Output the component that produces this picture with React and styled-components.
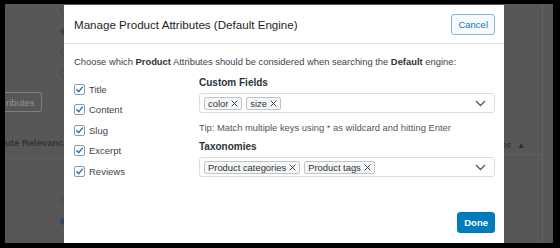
import styled, { createGlobalStyle } from "styled-components";

const GlobalStyle = createGlobalStyle`
  html, body {
    margin: 0;
    padding: 0;
    background: #000;
  }
  body {
    font-family: "Liberation Sans", Arial, sans-serif;
  }
`;

const Frame = styled.div`
  position: relative;
  margin: 4px 7px 0 5px;
  height: 239px;
  background: #575757;
  overflow: hidden;
  display: grid;
  grid-template-columns: 1fr 130px;
`;

const LeftPane = styled.div`
  display: flex;
  flex-direction: column;
  align-items: flex-start;
`;

const RadioStack = styled.div`
  display: flex;
  flex-direction: column;
  gap: 14px;
  padding: ${(p) => p.$pad || "3px 0 0 55px"};
`;

const Radio = styled.span`
  width: 7px;
  height: 7px;
  border-radius: 50%;
  box-sizing: border-box;
  border: 1px solid #3f4a55;
  background: ${(p) => (p.$on ? "#2d4763" : "transparent")};
`;

const GhostButton = styled.div`
  margin-top: 15px;
  width: 37px;
  height: 20px;
  box-sizing: border-box;
  border: 1px solid #7d7d7d;
  border-left: none;
  border-radius: 0 3px 3px 0;
  color: #8e959c;
  font-size: 9.5px;
  display: flex;
  align-items: center;
  padding-left: 1px;
`;

const Rule = styled.div`
  align-self: stretch;
  height: 1px;
  background: #5f5f5f;
  margin-top: ${(p) => p.$top || 0}px;
`;

const SectionLabel = styled.div`
  margin-top: 25px;
  color: #343434;
  font-size: 9.5px;
  font-weight: 700;
  white-space: nowrap;
`;

const RightPane = styled.div`
  display: flex;
  justify-content: flex-end;
`;

const SidePanel = styled.div`
  width: 48px;
  border-right: 1px solid #636363;
  margin-right: 10px;
  display: flex;
  flex-direction: column;
`;

const PanelHead = styled.div`
  margin-top: 132px;
  height: 18px;
  display: flex;
  align-items: center;
  gap: 6px;
  padding-left: 1px;
  color: #2f2f2f;
  font-size: 8.5px;
  border-bottom: 1px solid #5f5f5f;
`;

const Modal = styled.div`
  position: absolute;
  top: 1px;
  left: 59px;
  width: 440px;
  bottom: 0;
  background: #fff;
  display: flex;
  flex-direction: column;
`;

const Header = styled.div`
  height: 38px;
  border-bottom: 1px solid #e3e4e6;
  display: flex;
  align-items: center;
  justify-content: space-between;
  padding: 0 9px 0 10px;
`;

const Title = styled.h1`
  margin: 0;
  font-size: 11.6px;
  font-weight: 400;
  color: #1e1e1e;
`;

const Button = styled.button`
  height: 21px;
  box-sizing: border-box;
  border-radius: 3px;
  font-family: inherit;
  font-size: 9.5px;
  padding: 0 6px;
  cursor: pointer;
  border: 1px solid ${(p) => (p.$primary ? "#007cba" : "#84b7d6")};
  background: ${(p) => (p.$primary ? "#007cba" : "#f5fafd")};
  color: ${(p) => (p.$primary ? "#fff" : "#1d73ad")};
  font-weight: ${(p) => (p.$primary ? 700 : 400)};
`;

const Body = styled.div`
  padding: 12px 9px 0 10px;
  display: flex;
  flex-direction: column;
`;

const Intro = styled.p`
  margin: 0;
  font-size: 9.4px;
  line-height: 12px;
  color: #3c434a;

  b {
    font-weight: 700;
    color: #2c3338;
  }
`;

const Columns = styled.div`
  margin-top: 8px;
  display: flex;
`;

const CheckList = styled.div`
  width: 125px;
  padding-top: 3px;
  display: flex;
  flex-direction: column;
`;

const CheckRow = styled.label`
  height: 20.5px;
  display: flex;
  align-items: center;
  gap: 4px;
  font-size: 9.5px;
  color: #3c434a;
`;

const Box = styled.span`
  width: 11px;
  height: 11px;
  box-sizing: border-box;
  border: 1px solid #8d9aa6;
  border-radius: 2px;
  display: flex;
  align-items: center;
  justify-content: center;
  background: #fff;
`;

const Fields = styled.div`
  flex: 1;
  display: flex;
  flex-direction: column;
`;

const FieldLabel = styled.div`
  height: 14px;
  line-height: 14px;
  font-size: 10px;
  font-weight: 700;
  color: #2c3338;
  margin-top: ${(p) => p.$top || 0}px;
`;

const Select = styled.div`
  margin-top: 3px;
  height: 20px;
  box-sizing: border-box;
  border: 1px solid #dcdcde;
  border-radius: 3px;
  display: flex;
  align-items: center;
  gap: 4px;
  padding: 0 8px 0 4px;
`;

const Chip = styled.span`
  height: 13px;
  box-sizing: border-box;
  border: 1px solid #c3c4c7;
  border-radius: 2px;
  background: #f6f7f7;
  display: flex;
  align-items: center;
  gap: 3px;
  padding: 0 3px;
  font-size: 9.4px;
  color: #2c3338;
`;

const Chevron = styled.span`
  margin-left: auto;
  display: flex;
`;

const Tip = styled.p`
  margin: 9px 0 0;
  font-size: 9.4px;
  line-height: 12px;
  color: #50575e;
`;

const Footer = styled.div`
  margin-top: 35px;
  display: flex;
  justify-content: flex-end;
`;

const Check = () => (
  <svg width="9" height="9" viewBox="0 0 10 10">
    <path d="M2 5.2 L4.2 7.4 L8.2 2.4" fill="none" stroke="#2271b1" strokeWidth="1.6" strokeLinecap="round" strokeLinejoin="round" />
  </svg>
);

const Cross = () => (
  <svg width="7" height="7" viewBox="0 0 7 7">
    <path d="M0.6 0.6 L6.4 6.4 M6.4 0.6 L0.6 6.4" stroke="#3c434a" strokeWidth="1" />
  </svg>
);

const Down = () => (
  <svg width="11" height="7" viewBox="0 0 11 7">
    <path d="M1 1 L5.5 5.5 L10 1" fill="none" stroke="#50575e" strokeWidth="1.3" />
  </svg>
);

const attributes = ["Title", "Content", "Slug", "Excerpt", "Reviews"];

const Field = ({ label, chips, top }) => (
  <>
    <FieldLabel $top={top}>{label}</FieldLabel>
    <Select>
      {chips.map((c) => (
        <Chip key={c}>
          {c}
          <Cross />
        </Chip>
      ))}
      <Chevron>
        <Down />
      </Chevron>
    </Select>
  </>
);

export default function App() {
  return (
    <>
      <GlobalStyle />
      <Frame>
        <LeftPane>
          <RadioStack>
            <Radio />
            <Radio $on />
            <Radio />
            <Radio />
          </RadioStack>
          <GhostButton>ributes</GhostButton>
          <SectionLabel>ute Relevanc</SectionLabel>
          <Rule $top={10} />
          <RadioStack $pad="38px 0 0 55px">
            <Radio />
            <Radio $on />
          </RadioStack>
        </LeftPane>
        <RightPane>
          <SidePanel>
            <PanelHead>
              <span>utes</span>
              <span>▲</span>
            </PanelHead>
          </SidePanel>
        </RightPane>

        <Modal>
          <Header>
            <Title>Manage Product Attributes (Default Engine)</Title>
            <Button>Cancel</Button>
          </Header>
          <Body>
            <Intro>
              Choose which <b>Product</b> Attributes should be considered when
              searching the <b>Default</b> engine:
            </Intro>
            <Columns>
              <CheckList>
                {attributes.map((a) => (
                  <CheckRow key={a}>
                    <Box>
                      <Check />
                    </Box>
                    {a}
                  </CheckRow>
                ))}
              </CheckList>
              <Fields>
                <Field label="Custom Fields" chips={["color", "size"]} />
                <Tip>Tip: Match multiple keys using * as wildcard and hitting Enter</Tip>
                <Field
                  label="Taxonomies"
                  chips={["Product categories", "Product tags"]}
                  top={6}
                />
                <Footer>
                  <Button $primary>Done</Button>
                </Footer>
              </Fields>
            </Columns>
          </Body>
        </Modal>
      </Frame>
    </>
  );
}
